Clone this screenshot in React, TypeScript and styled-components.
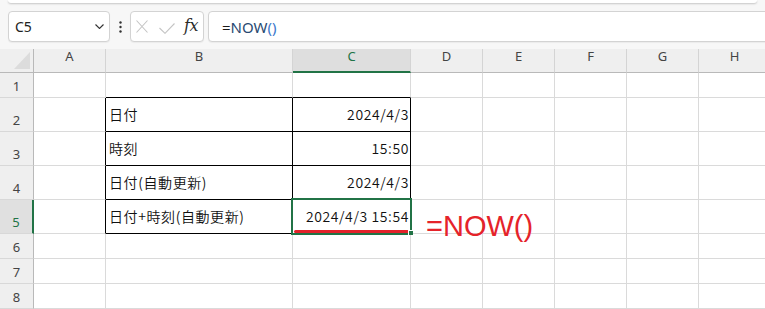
import React from 'react';
import styled, { createGlobalStyle } from 'styled-components';

const GREEN = '#217346';
const GRID = '#dadada';
const BLACK = '#000000';
const HEAD_BG = '#efefef';
const HEAD_LINE = '#b9b9b9';

const GlobalStyle = createGlobalStyle`
  html, body { margin: 0; padding: 0; background: #f7f7f7; }
  body { overflow: hidden; }
  *, *::before, *::after { box-sizing: border-box; }
`;

const Window = styled.div`
  width: 765px;
  height: 309px;
  overflow: hidden;
  background: #f7f7f7;
  display: flex;
  flex-direction: column;
  font-family: "Noto Sans", "Liberation Sans", sans-serif;
`;

const RibbonEdge = styled.div`
  flex: none;
  height: 3px;
  margin: 0 8px;
  background: #ffffff;
  border-radius: 0 0 6px 6px;
  box-shadow: 0 1px 2px rgba(0, 0, 0, 0.2);
`;

const FormulaBar = styled.div`
  flex: none;
  display: flex;
  align-items: stretch;
  height: 31px;
  margin: 8px -14px 7px 8px;
`;

const Box = styled.div`
  background: #ffffff;
  border: 1px solid #d3d3d3;
  border-radius: 4px;
  box-shadow: 0 1px 1px rgba(0, 0, 0, 0.05);
  display: flex;
  align-items: center;
`;

const NameBox = styled(Box)`
  width: 102px;
  padding: 0 5px 0 6px;
  justify-content: space-between;
  font-size: 14px;
  color: #222222;
`;

const DotsCell = styled.div`
  width: 20px;
  display: flex;
  align-items: center;
  justify-content: center;
`;

const EditBox = styled(Box)`
  width: 74px;
  padding: 0 0 0 5px;
`;

const IconSlot = styled.span<{ $w: number; $ml: number; $dy?: number }>`
  display: flex;
  width: ${(p) => p.$w}px;
  margin-left: ${(p) => p.$ml}px;
  transform: translateY(${(p) => p.$dy ?? 0}px);
`;

const Fx = styled.span`
  margin-left: 9px;
  font-family: "DejaVu Serif", "Liberation Serif", serif;
  font-style: italic;
  font-weight: 400;
  font-size: 16px;
  letter-spacing: -0.5px;
  color: #2b2b2b;
  line-height: 1;
  transform: translateY(-1px);
`;

const FormulaInput = styled(Box)`
  flex: 1;
  margin-left: 4px;
  padding-left: 13px;
  font-size: 15px;
  color: #1a1a1a;
`;

const Tok = styled.span<{ $c: string }>`
  color: ${(p) => p.$c};
`;

const Sheet = styled.div<{ $cols: string; $rows: string }>`
  display: grid;
  grid-template-columns: ${(p) => p.$cols};
  grid-template-rows: ${(p) => p.$rows};
`;

const Corner = styled.div`
  background: ${HEAD_BG};
  border-right: 1px solid ${HEAD_LINE};
  border-bottom: 1px solid ${HEAD_LINE};
  display: flex;
  align-items: flex-end;
  justify-content: flex-end;
  padding: 0 3px 3px 0;
`;

const CornerTriangle = styled.div`
  width: 16px;
  height: 17px;
  background: #dcdcdc;
  clip-path: polygon(100% 0, 100% 100%, 0 100%);
`;

const ColHead = styled.div<{ $sel?: boolean }>`
  background: ${(p) => (p.$sel ? '#dedede' : HEAD_BG)};
  border-right: 1px solid #d4d4d4;
  border-bottom: ${(p) => (p.$sel ? `2px solid ${GREEN}` : `1px solid ${HEAD_LINE}`)};
  display: flex;
  justify-content: center;
  align-items: flex-start;
  font-size: 13px;
  line-height: 15px;
  color: ${(p) => (p.$sel ? GREEN : '#444444')};
`;

const RowHead = styled.div<{ $sel?: boolean }>`
  background: ${(p) => (p.$sel ? '#e0e0e0' : HEAD_BG)};
  border-right: ${(p) => (p.$sel ? `2px solid ${GREEN}` : `1px solid ${HEAD_LINE}`)};
  border-bottom: 1px solid #d8d8d8;
  display: flex;
  justify-content: center;
  align-items: flex-end;
  padding-bottom: 3px;
  font-size: 13px;
  line-height: 16px;
  color: ${(p) => (p.$sel ? GREEN : '#444444')};
`;

const Cell = styled.div<{ $r?: string; $b?: string; $align?: 'left' | 'right'; $sel?: boolean }>`
  position: ${(p) => (p.$sel ? 'relative' : 'static')};
  background: #ffffff;
  border-right: 1px solid ${(p) => p.$r ?? GRID};
  border-bottom: 1px solid ${(p) => p.$b ?? GRID};
  display: flex;
  align-items: flex-end;
  justify-content: ${(p) => (p.$align === 'right' ? 'flex-end' : 'flex-start')};
  padding: 0 1px 7px 3px;
  font-family: "Noto Sans CJK JP", "Noto Sans", sans-serif;
  font-size: 14px;
  font-weight: 350;
  letter-spacing: 0.6px;
  line-height: 20px;
  color: #111111;
  white-space: nowrap;
`;

const Selection = styled.div`
  position: absolute;
  top: -2px;
  left: -2px;
  right: -2px;
  bottom: -2px;
  border: 2px solid ${GREEN};
  pointer-events: none;
`;

const RedUnderline = styled.div`
  position: absolute;
  left: 1px;
  right: -1px;
  bottom: 0;
  height: 3px;
  border-radius: 2px;
  background: #e3222a;
`;

const FillHandle = styled.div`
  position: absolute;
  right: -3px;
  bottom: -2px;
  width: 5px;
  height: 5px;
  background: ${GREEN};
  border-left: 1px solid #ffffff;
  border-top: 1px solid #ffffff;
`;

const Annotation = styled.span`
  position: relative;
  z-index: 2;
  margin: 0 0 -15px 12px;
  font-family: "Liberation Sans", Arial, sans-serif;
  font-size: 29px;
  font-weight: 400;
  letter-spacing: 0;
  line-height: 29px;
  color: #e5232a;
  white-space: nowrap;
`;

const ChevronIcon = () => (
  <svg width="9" height="5" viewBox="0 0 9 5" fill="none">
    <path d="M0.5 0.5 L4.5 4.5 L8.5 0.5" stroke="#333" strokeWidth="1.1" />
  </svg>
);

const DotsIcon = () => (
  <svg width="3" height="12" viewBox="0 0 3 12">
    <circle cx="1.5" cy="1.5" r="1.2" fill="#333" />
    <circle cx="1.5" cy="6" r="1.2" fill="#333" />
    <circle cx="1.5" cy="10.5" r="1.2" fill="#333" />
  </svg>
);

const CancelIcon = () => (
  <svg width="12" height="13" viewBox="0 0 12 13" fill="none">
    <path d="M0.5 0.5 L11.5 12.5 M11.5 0.5 L0.5 12.5" stroke="#c4c4c4" strokeWidth="1.1" />
  </svg>
);

const EnterIcon = () => (
  <svg width="16" height="11" viewBox="0 0 16 11" fill="none">
    <path d="M0.5 5 L6 10.3 L15.5 0.5" stroke="#c4c4c4" strokeWidth="1.1" />
  </svg>
);

type Col = { key: string; w: number };
const cols: Col[] = [
  { key: 'A', w: 72 },
  { key: 'B', w: 187 },
  { key: 'C', w: 118 },
  { key: 'D', w: 72 },
  { key: 'E', w: 72 },
  { key: 'F', w: 72 },
  { key: 'G', w: 72 },
  { key: 'H', w: 72 },
];

const rows = [
  { n: 1, h: 25 },
  { n: 2, h: 34 },
  { n: 3, h: 34 },
  { n: 4, h: 34 },
  { n: 5, h: 34 },
  { n: 6, h: 25 },
  { n: 7, h: 25 },
  { n: 8, h: 25 },
];

const values: Record<string, string> = {
  B2: '日付',
  C2: '2024/4/3',
  B3: '時刻',
  C3: '15:50',
  B4: '日付(自動更新)',
  C4: '2024/4/3',
  B5: '日付+時刻(自動更新)',
  C5: '2024/4/3 15:54',
};

const inTable = (c: string, r: number) => (c === 'B' || c === 'C') && r >= 2 && r <= 5;

export default function App() {
  const colTemplate = ['34px', ...cols.map((c) => `${c.w}px`)].join(' ');
  const rowTemplate = ['24px', ...rows.map((r) => `${r.h}px`)].join(' ');

  return (
    <>
      <GlobalStyle />
      <Window>
        <RibbonEdge />
        <FormulaBar>
          <NameBox>
            <span>C5</span>
            <ChevronIcon />
          </NameBox>
          <DotsCell>
            <DotsIcon />
          </DotsCell>
          <EditBox>
            <IconSlot $w={12} $ml={0} $dy={0}>
              <CancelIcon />
            </IconSlot>
            <IconSlot $w={16} $ml={11} $dy={2}>
              <EnterIcon />
            </IconSlot>
            <Fx>fx</Fx>
          </EditBox>
          <FormulaInput>
            <Tok $c="#1a1a1a">=</Tok>
            <Tok $c="#294a72">NOW</Tok>
            <Tok $c="#3b78cc">()</Tok>
          </FormulaInput>
        </FormulaBar>

        <Sheet $cols={colTemplate} $rows={rowTemplate}>
          <Corner>
            <CornerTriangle />
          </Corner>
          {cols.map((c) => (
            <ColHead key={c.key} $sel={c.key === 'C'}>
              {c.key}
            </ColHead>
          ))}
          {rows.map((r) => (
            <React.Fragment key={r.n}>
              <RowHead $sel={r.n === 5}>{r.n}</RowHead>
              {cols.map((c) => {
                const id = `${c.key}${r.n}`;
                const table = inTable(c.key, r.n);
                const right =
                  table || (c.key === 'A' && r.n >= 2 && r.n <= 5) ? BLACK : undefined;
                const bottom = table || ((c.key === 'B' || c.key === 'C') && r.n === 1) ? BLACK : undefined;
                const selected = id === 'C5';
                return (
                  <Cell
                    key={id}
                    $r={right}
                    $b={bottom}
                    $align={c.key === 'C' ? 'right' : 'left'}
                    $sel={selected}
                  >
                    {values[id]}
                    {id === 'D5' && <Annotation>=NOW()</Annotation>}
                    {selected && (
                      <>
                        <RedUnderline />
                        <Selection />
                        <FillHandle />
                      </>
                    )}
                  </Cell>
                );
              })}
            </React.Fragment>
          ))}
        </Sheet>
      </Window>
    </>
  );
}
